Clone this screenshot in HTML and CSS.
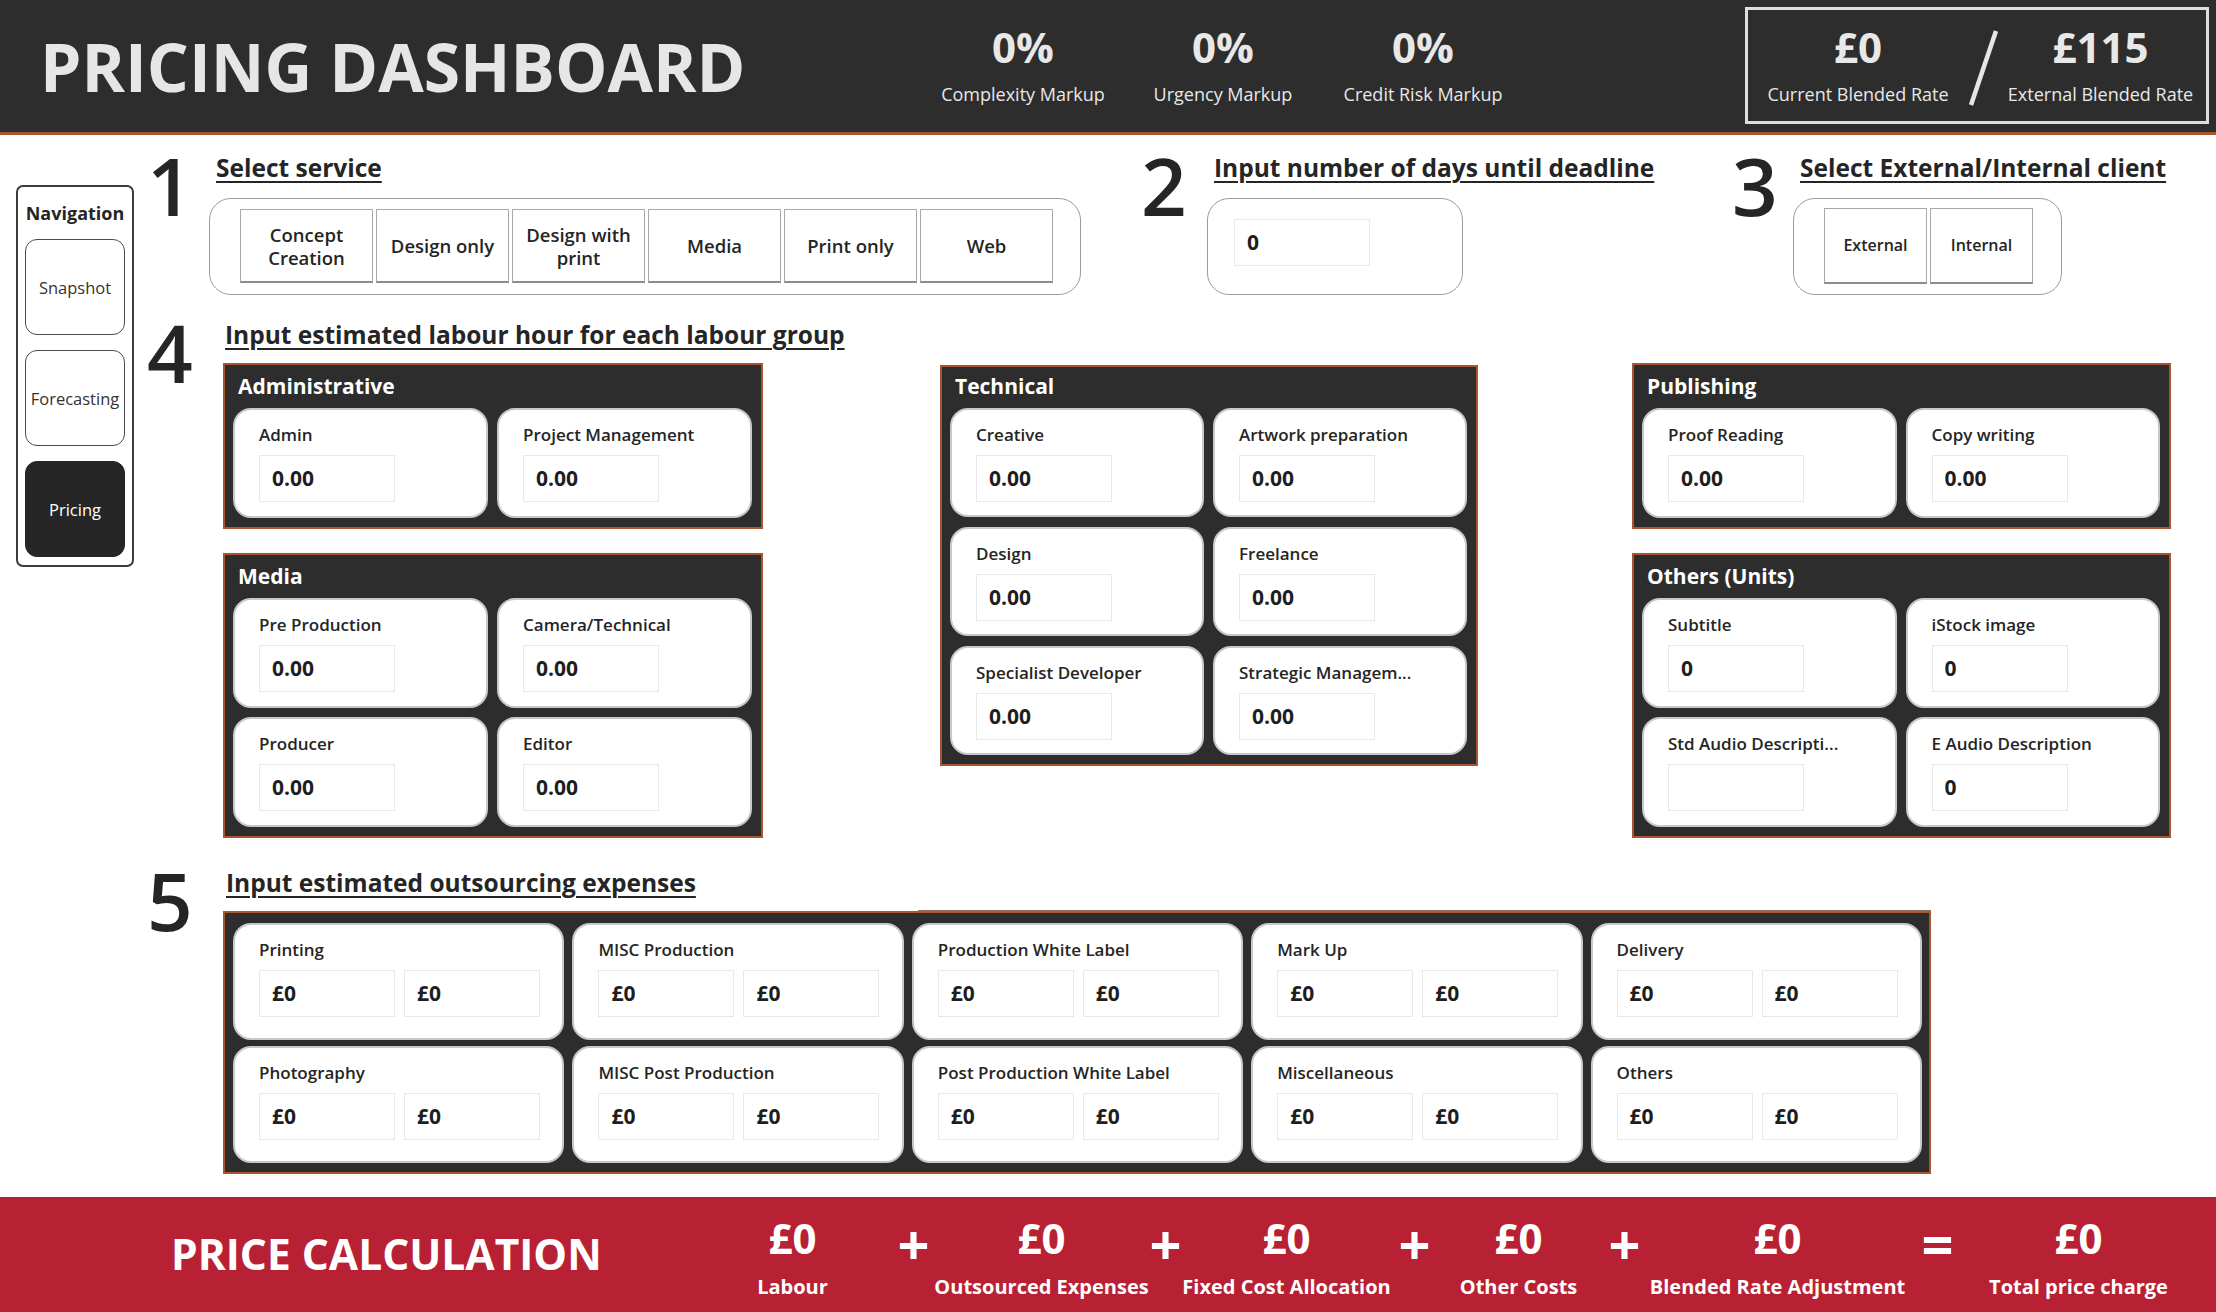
FILE: index.html
```html
<!DOCTYPE html>
<html lang="en">
<head>
    <meta charset="UTF-8">
    <meta name="viewport" content="width=device-width, initial-scale=1.0">
    <title>Pricing Dashboard</title>
    <link rel="stylesheet" href="styles.css">
</head>
<body>
    <header class="topbar">
        <h1 class="title">PRICING DASHBOARD</h1>
        <div class="stat"><span class="stat-value">0%</span><span class="stat-label">Complexity Markup</span></div>
        <div class="stat"><span class="stat-value">0%</span><span class="stat-label">Urgency Markup</span></div>
        <div class="stat"><span class="stat-value">0%</span><span class="stat-label">Credit Risk Markup</span></div>
        <div class="rates">
            <div class="stat"><span class="stat-value">£0</span><span class="stat-label">Current Blended Rate</span></div>
            <svg class="slash" width="31" height="76" viewBox="0 0 31 76"><line x1="3" y1="75" x2="28" y2="1" stroke="#e6e6e6" stroke-width="4.5"/></svg>
            <div class="stat"><span class="stat-value">£115</span><span class="stat-label">External Blended Rate</span></div>
        </div>
    </header>

    <div class="page">
        <nav class="nav">
            <div class="nav-title">Navigation</div>
            <a class="nav-btn">Snapshot</a>
            <a class="nav-btn">Forecasting</a>
            <a class="nav-btn active">Pricing</a>
        </nav>

        <main class="content">
            <section class="row row-top">
                <div class="step step-service">
                    <div class="num">1</div>
                    <div class="step-body">
                        <h2 class="heading">Select service</h2>
                        <div class="frame service-box">
                            <div class="opt">Concept<br>Creation</div>
                            <div class="opt">Design only</div>
                            <div class="opt">Design with<br>print</div>
                            <div class="opt">Media</div>
                            <div class="opt">Print only</div>
                            <div class="opt">Web</div>
                        </div>
                    </div>
                </div>
                <div class="step step-days">
                    <div class="num">2</div>
                    <div class="step-body">
                        <h2 class="heading">Input number of days until deadline</h2>
                        <div class="frame days-box">
                            <div class="field">0</div>
                        </div>
                    </div>
                </div>
                <div class="step step-client">
                    <div class="num">3</div>
                    <div class="step-body">
                        <h2 class="heading">Select External/Internal client</h2>
                        <div class="frame client-box">
                            <div class="opt">External</div>
                            <div class="opt">Internal</div>
                        </div>
                    </div>
                </div>
            </section>

            <section class="row row-labour">
                <div class="num">4</div>
                <div class="step-body">
                    <h2 class="heading">Input estimated labour hour for each labour group</h2>
                    <div class="groups">
                        <div class="group-col col-left">
                            <div class="panel">
                                <div class="panel-title">Administrative</div>
                                <div class="cards" id="admin"></div>
                            </div>
                            <div class="panel">
                                <div class="panel-title">Media</div>
                                <div class="cards" id="media"></div>
                            </div>
                        </div>
                        <div class="panel panel-tech">
                            <div class="panel-title">Technical</div>
                            <div class="cards" id="technical"></div>
                        </div>
                        <div class="group-col col-right">
                            <div class="panel">
                                <div class="panel-title">Publishing</div>
                                <div class="cards" id="publishing"></div>
                            </div>
                            <div class="panel">
                                <div class="panel-title">Others (Units)</div>
                                <div class="cards" id="others"></div>
                            </div>
                        </div>
                    </div>
                </div>
            </section>

            <section class="row row-out">
                <div class="num">5</div>
                <div class="step-body">
                    <h2 class="heading">Input estimated outsourcing expenses</h2>
                    <div class="panel out-panel">
                        <div class="cards" id="outsourcing"></div>
                    </div>
                </div>
            </section>
        </main>
    </div>

    <footer class="calc">
        <div class="calc-title">PRICE CALCULATION</div>
        <div class="term"><span class="term-value">£0</span><span class="term-label">Labour</span></div>
        <div class="op">+</div>
        <div class="term"><span class="term-value">£0</span><span class="term-label">Outsourced Expenses</span></div>
        <div class="op">+</div>
        <div class="term"><span class="term-value">£0</span><span class="term-label">Fixed Cost Allocation</span></div>
        <div class="op">+</div>
        <div class="term"><span class="term-value">£0</span><span class="term-label">Other Costs</span></div>
        <div class="op">+</div>
        <div class="term"><span class="term-value">£0</span><span class="term-label">Blended Rate Adjustment</span></div>
        <div class="op">=</div>
        <div class="term"><span class="term-value">£0</span><span class="term-label">Total price charge</span></div>
    </footer>

    <script>
        const grupos = {
            admin: ["Admin", "Project Management"],
            media: ["Pre Production", "Camera/Technical", "Producer", "Editor"],
            technical: ["Creative", "Artwork preparation", "Design", "Freelance", "Specialist Developer", "Strategic Managem..."],
            publishing: ["Proof Reading", "Copy writing"],
            others: [["Subtitle", "0"], ["iStock image", "0"], ["Std Audio Descripti...", ""], ["E Audio Description", "0"]]
        };

        const despesas = ["Printing", "MISC Production", "Production White Label", "Mark Up", "Delivery",
            "Photography", "MISC Post Production", "Post Production White Label", "Miscellaneous", "Others"];

        function preencherGrupo(id, itens) {
            const box = document.getElementById(id);
            box.innerHTML = itens.map(item => {
                const [label, valor] = Array.isArray(item) ? item : [item, "0.00"];
                return `<div class="card"><div class="card-label">${label}</div><div class="field">${valor}</div></div>`;
            }).join("");
        }

        Object.keys(grupos).forEach(id => preencherGrupo(id, grupos[id]));

        document.getElementById("outsourcing").innerHTML = despesas.map(label =>
            `<div class="card"><div class="card-label">${label}</div>
             <div class="pair"><div class="field">£0</div><div class="field">£0</div></div></div>`
        ).join("");
    </script>
</body>
</html>
```

FILE: styles.css
```css
body {
    margin: 0;
    width: 2216px;
    height: 1312px;
    overflow: hidden;
    font-family: 'Open Sans', 'Liberation Sans', sans-serif;
    color: #252525;
    background: #fff;
}

/* top bar */
.topbar {
    display: flex;
    align-items: center;
    height: 132px;
    background: #2d2d2d;
    border-bottom: 3px solid #a9552f;
    color: #e8e8e8;
}
.title {
    margin: 0 0 0 40px;
    width: 883px;
    flex-shrink: 0;
    font-size: 66px;
    font-weight: 700;
    line-height: 66px;
    color: #e6e6e6;
}
.stat {
    display: flex;
    flex-direction: column;
    align-items: center;
    width: 200px;
}
.stat-value {
    font-size: 42px;
    font-weight: 700;
    line-height: 42px;
}
.stat-label {
    font-size: 18px;
    line-height: 24px;
    margin-top: 14px;
    white-space: nowrap;
}
.rates {
    align-self: flex-start;
    margin: 7px 7px 0 auto;
    width: 464px;
    height: 117px;
    box-sizing: border-box;
    border: 3px solid #dedede;
    padding-top: 16px;
    display: grid;
    grid-template-columns: 220px 31px 203px;
    align-items: start;
}
.rates .stat {
    width: auto;
}
.slash {
    margin-top: 4px;
}

/* layout */
.page {
    display: flex;
    align-items: flex-start;
}
.nav {
    margin: 50px 0 0 16px;
    width: 118px;
    height: 382px;
    box-sizing: border-box;
    border: 2px solid #3c3c3c;
    border-radius: 7px;
    padding: 15px 7px 0;
    display: flex;
    flex-direction: column;
    flex-shrink: 0;
}
.nav-title {
    font-size: 18px;
    font-weight: 700;
    line-height: 22px;
    text-align: center;
    margin-bottom: 15px;
}
.nav-btn {
    flex-shrink: 0;
    height: 96px;
    box-sizing: border-box;
    border: 1.5px solid #4a4a4a;
    border-radius: 12px;
    display: flex;
    align-items: center;
    justify-content: center;
    font-size: 16.5px;
    color: #333;
    margin-bottom: 15px;
}
.nav-btn:last-child {
    margin-bottom: 0;
}
.nav-btn.active {
    background: #262626;
    border-color: #262626;
    color: #fff;
}

.content {
    margin-left: 13px;
}
.row {
    display: flex;
}
.step {
    display: flex;
}
.num {
    font-size: 80px;
    font-weight: 600;
    line-height: 64px;
    color: #252525;
    flex-shrink: 0;
    width: 76px;
}
.step-service .num { width: 62px; }
.step-days { margin-left: 60px; }
.step-days .num { width: 66px; }
.step-days .step-body { width: 256px; }
.step-client { margin-left: 269px; }
.step-client .num { width: 61px; }
.step-client .step-body { width: 269px; }

.step-body {
    display: flex;
    flex-direction: column;
}
.heading {
    margin: 0 0 13px 2px;
    font-size: 24.5px;
    font-weight: 700;
    line-height: 30px;
    text-decoration: underline;
    text-decoration-thickness: 2px;
    text-underline-offset: 4px;
    white-space: nowrap;
}
.row-top {
    margin-top: 18px;
}
.row-top .heading {
    margin: 0 0 15px 7px;
}

/* step 1-3 boxes */
.frame {
    height: 97px;
    box-sizing: border-box;
    border: 1px solid #9b9b9b;
    border-radius: 22px;
}
.service-box {
    width: 872px;
    display: flex;
    gap: 3px;
    padding: 10px 0 0 30px;
}
.opt {
    width: 133px;
    height: 74px;
    box-sizing: border-box;
    border: 1px solid #a8a8a8;
    border-bottom: 2px solid #8c8c8c;
    display: flex;
    align-items: center;
    justify-content: center;
    text-align: center;
    font-size: 18.5px;
    font-weight: 600;
    line-height: 23px;
}
.days-box {
    width: 256px;
    padding: 20px 0 0 26px;
}
.client-box {
    width: 269px;
    display: flex;
    gap: 3px;
    padding: 9px 0 0 30px;
}
.client-box .opt {
    width: 103px;
    height: 76px;
    font-size: 16px;
}

.field {
    width: 136px;
    height: 47px;
    box-sizing: border-box;
    border: 1px solid #e8e8e8;
    background: #fff;
    padding-left: 12px;
    font-size: 21px;
    font-weight: 700;
    line-height: 45px;
    color: #1e1e1e;
}

/* labour groups */
.row-labour {
    margin-top: 25px;
}
.groups {
    display: flex;
    align-items: flex-start;
}
.group-col {
    display: flex;
    flex-direction: column;
    gap: 24px;
}
.col-left { width: 540px; }
.col-right { width: 539px; margin-left: 154px; }

.panel {
    background: #2d2d2d;
    border: 2px solid #a9552f;
    padding: 8px 9px 9px 8px;
}
.panel-tech {
    width: 538px;
    box-sizing: border-box;
    margin-left: 177px;
    margin-top: 2px;
    padding-top: 6px;
}
.panel-title {
    color: #fff;
    font-size: 21px;
    font-weight: 700;
    line-height: 26px;
    margin: 0 0 9px 5px;
}
.cards {
    display: grid;
    grid-template-columns: 1fr 1fr;
    column-gap: 9px;
    row-gap: 9px;
    grid-auto-rows: 110px;
}
.panel-tech .cards {
    row-gap: 10px;
    grid-auto-rows: 109px;
}
.card {
    background: #fff;
    border: 2px solid #c7c7ce;
    border-radius: 18px;
    padding: 14px 0 0 24px;
    box-sizing: border-box;
    min-width: 0;
}
.card-label {
    font-size: 17px;
    font-weight: 600;
    line-height: 22px;
    margin-bottom: 9px;
    white-space: nowrap;
}

/* outsourcing */
.row-out {
    margin-top: 30px;
}
.row-out .heading {
    margin-left: 3px;
}
.out-panel {
    position: relative;
    width: 1708px;
    box-sizing: border-box;
    padding: 10px 7px 9px 8px;
}
.out-panel::before {
    content: "";
    position: absolute;
    top: -3px;
    left: 693px;
    right: -2px;
    height: 2px;
    background: #8f6a58;
}
.out-panel .cards {
    grid-template-columns: repeat(5, 1fr);
    column-gap: 8px;
    row-gap: 6px;
    grid-auto-rows: 117px;
}
.pair {
    display: flex;
    gap: 9px;
}

/* price calculation */
.calc {
    margin-top: 23px;
    height: 115px;
    box-sizing: border-box;
    background: #b82134;
    color: #fff;
    display: grid;
    grid-template-columns: 561px 121px 121px 135px 113px 129px 127px 81px 131px 175px 145px 137px;
    align-items: start;
    padding: 20px 0 0 171px;
}
.calc-title {
    font-size: 42.5px;
    font-weight: 700;
    line-height: 42px;
    margin-top: 16px;
    white-space: nowrap;
}
.term {
    display: flex;
    flex-direction: column;
    align-items: center;
}
.term-value {
    font-size: 42px;
    font-weight: 700;
    line-height: 42px;
}
.term-label {
    font-size: 20px;
    font-weight: 700;
    line-height: 24px;
    margin-top: 16px;
    white-space: nowrap;
}
.op {
    font-size: 56px;
    font-weight: 700;
    line-height: 52px;
    text-align: center;
}
```
